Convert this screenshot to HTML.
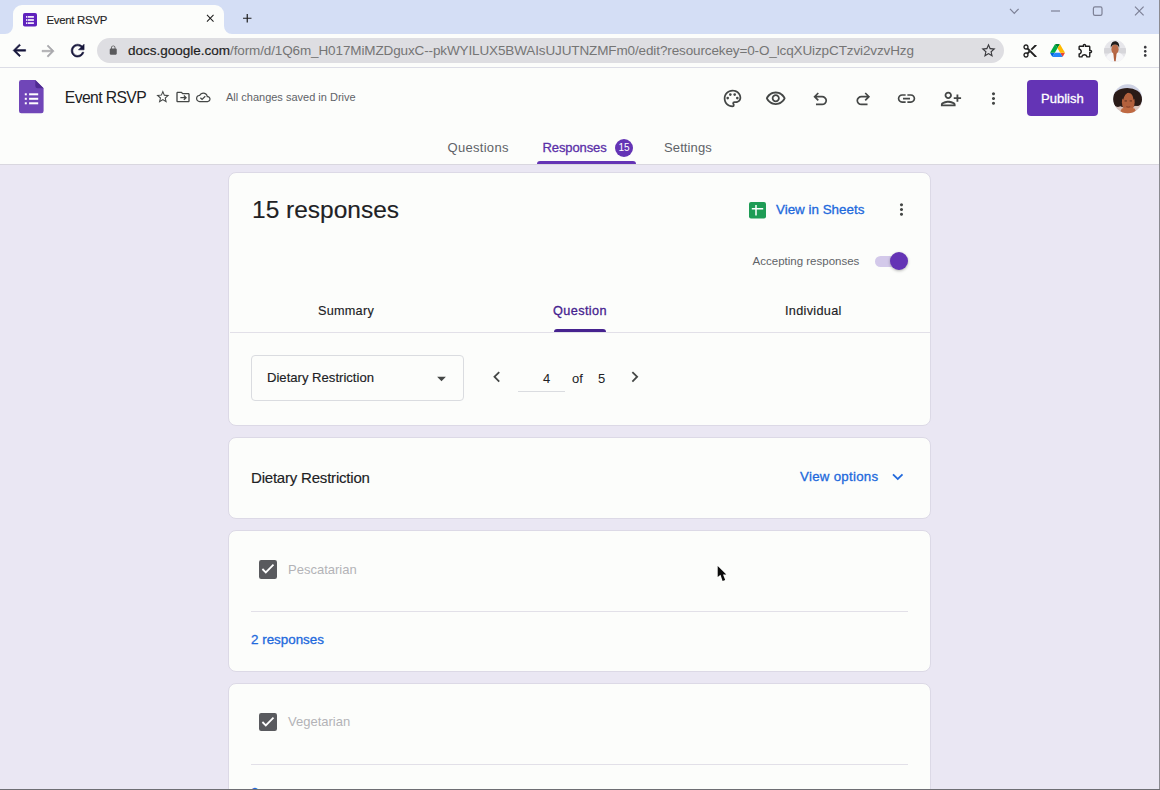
<!DOCTYPE html>
<html lang="en">
<head>
<meta charset="utf-8">
<title>Event RSVP</title>
<style>
*{box-sizing:border-box;margin:0;padding:0}
html,body{width:1160px;height:790px;overflow:hidden}
body{position:relative;background:#eae7f3;font-family:"Liberation Sans",sans-serif;color:#202124}
.abs{position:absolute}
svg{position:absolute;overflow:visible}
.t{position:absolute;white-space:nowrap;line-height:1}
.m{-webkit-text-stroke:0.3px currentColor}
.l{-webkit-text-stroke:0.15px currentColor}
/* chrome */
#tabstrip{left:0;top:0;width:1160px;height:34px;background:#d4def5}
#tab{left:13px;top:5px;width:211px;height:30px;background:#fcfdfb;border-radius:9px 9px 0 0}
#toolbar{left:0;top:34px;width:1160px;height:33px;background:#fcfdfb}
#tbline{left:0;top:67px;width:1160px;height:1px;background:#dcdde6}
#url{left:97px;top:38px;width:907px;height:25px;border-radius:13px;background:#dedee2}
/* page */
#header{left:0;top:68px;width:1160px;height:96px;background:#fcfdfb}
.card{position:absolute;left:228px;width:703px;background:#fcfdfb;border:1px solid #dcd9e6;border-radius:8px}
.hr{position:absolute;height:1px;background:#e2e0e8}
.cb{position:absolute;width:18.2px;height:18.4px;border-radius:2.2px;background:#595a5e}
</style>
</head>
<body>
<!-- browser chrome -->
<div id="tabstrip" class="abs"></div>
<div id="tab" class="abs"></div>
<div id="toolbar" class="abs"></div>
<div id="tbline" class="abs"></div>
<div id="url" class="abs"></div>
<div class="t" id="tabtitle" style="left:46.5px;top:14.9px;font-size:11.4px;letter-spacing:-0.28px;color:#1f1f1f;-webkit-text-stroke:0.15px #1f1f1f">Event RSVP</div>
<div class="t" id="urltext" style="left:128px;top:44.3px;font-size:13.5px;color:#757575"><span id="urldom" style="color:#1f1f1f;-webkit-text-stroke:0.2px #1f1f1f">docs.google.com</span><span style="letter-spacing:-0.123px">/form/d/1Q6m_H017MiMZDguxC--pkWYILUX5BWAIsUJUTNZMFm0/edit?resourcekey=0-O_lcqXUizpCTzvi2vzvHzg</span></div>

<!-- page header -->
<div id="header" class="abs"></div>
<div class="abs" style="left:0;top:164px;width:1160px;height:1px;background:#d9d7df"></div>
<div class="t" id="title" style="left:64.8px;top:89.7px;font-size:15.7px;color:#202124;letter-spacing:-0.6px">Event RSVP</div>
<div class="t" id="saved" style="left:226px;top:91.5px;font-size:11px;color:#5f6368">All changes saved in Drive</div>
<div class="abs" id="publish" style="left:1027px;top:80px;width:71px;height:36px;border-radius:4px;background:#6434b5"></div>
<div class="t m" id="publisht" style="left:1041px;top:92.0px;font-size:13px;color:#fff">Publish</div>

<div class="t" id="tq" style="left:447.5px;top:141.0px;font-size:13px;color:#5f6368;letter-spacing:0.3px">Questions</div>
<div class="t m" id="tr" style="left:542.5px;top:141.0px;font-size:13px;color:#5b2fa8;letter-spacing:-0.1px">Responses</div>
<div class="abs" id="badge" style="left:615px;top:139px;width:18px;height:18px;border-radius:9px;background:#6434b5"></div>
<div class="t" id="badget" style="left:618.4px;top:143.2px;font-size:10px;color:#fff">15</div>
<div class="t" id="ts" style="left:664px;top:141.0px;font-size:13px;color:#5f6368;letter-spacing:0.12px">Settings</div>
<div class="abs" id="tabul" style="left:537px;top:161px;width:99px;height:3px;border-radius:3px 3px 0 0;background:#6434b5"></div>

<!-- cards -->
<div class="card" style="top:172px;height:254px"></div>
<div class="t l" id="h15" style="left:252px;top:198.0px;font-size:24.5px;color:#202124">15 responses</div>
<div class="t m" id="vis" style="left:776px;top:202.7px;font-size:13.4px;color:#2169dc">View in Sheets</div>
<div class="t" id="acc" style="left:752.6px;top:255.6px;font-size:11.5px;color:#5f6368">Accepting responses</div>
<div class="abs" id="track" style="left:875px;top:256px;width:32px;height:11px;border-radius:6px;background:#d3c9ea"></div>
<div class="abs" id="thumb" style="left:890px;top:252px;width:18px;height:18px;border-radius:9px;background:#6434b5;box-shadow:0 1px 3px rgba(0,0,0,.3)"></div>

<div class="t l" id="st1" style="left:318px;top:305.4px;font-size:12.7px;color:#202124;letter-spacing:0.24px">Summary</div>
<div class="t m" id="st2" style="left:553px;top:305.4px;font-size:12.7px;color:#46238f;letter-spacing:0.4px">Question</div>
<div class="t l" id="st3" style="left:785px;top:305.4px;font-size:12.7px;color:#202124;letter-spacing:0.3px">Individual</div>
<div class="hr" style="left:230px;top:332px;width:700px"></div>
<div class="abs" id="stul" style="left:554px;top:329px;width:52px;height:3px;border-radius:3px 3px 0 0;background:#46238f"></div>

<div class="abs" id="dd" style="left:251px;top:355px;width:213px;height:46px;border:1px solid #dadce0;border-radius:4px"></div>
<div class="t l" id="ddt" style="left:267px;top:371.1px;font-size:13.1px;color:#202124">Dietary Restriction</div>
<div class="t" id="n4" style="left:543px;top:372.4px;font-size:13px;color:#202124">4</div>
<div class="t" id="nof" style="left:572px;top:372.4px;font-size:13px;color:#202124">of</div>
<div class="t" id="n5" style="left:598px;top:372.4px;font-size:13px;color:#202124">5</div>
<div class="hr" style="left:518px;top:391px;width:47px;background:#dadce0"></div>

<div class="card" style="top:437px;height:82px"></div>
<div class="t l" id="dr" style="left:251px;top:470.4px;font-size:15px;color:#202124;letter-spacing:-0.2px">Dietary Restriction</div>
<div class="t m" id="vo" style="left:800px;top:469.6px;font-size:13.3px;color:#2169dc;letter-spacing:0.275px">View options</div>

<div class="card" style="top:530px;height:142px"></div>
<div class="cb" style="left:258.6px;top:560.4px"></div>
<svg style="left:258.6px;top:560.4px" width="18" height="18" viewBox="0 0 18 18"><path d="M3.400 9l3.400 3.400 7.700-7.700" fill="none" stroke="#fff" stroke-width="1.800"/></svg>
<div class="t" id="pes" style="left:288px;top:562.7px;font-size:13px;color:#b3b3b7">Pescatarian</div>
<div class="hr" style="left:251px;top:611px;width:657px"></div>
<div class="t m" id="r1" style="left:251px;top:633.2px;font-size:13.4px;color:#2169dc">2 responses</div>

<div class="card" style="top:683px;height:142px"></div>
<div class="cb" style="left:258.6px;top:712.8px"></div>
<svg style="left:258.6px;top:712.8px" width="18" height="18" viewBox="0 0 18 18"><path d="M3.400 9l3.400 3.400 7.700-7.700" fill="none" stroke="#fff" stroke-width="1.800"/></svg>
<div class="t" id="veg" style="left:288px;top:715.2px;font-size:13px;color:#b3b3b7">Vegetarian</div>
<div class="hr" style="left:251px;top:764px;width:657px"></div>
<div class="t m" id="r2" style="left:251px;top:786px;font-size:13.4px;color:#2169dc">2 responses</div>

<!-- icons -->
<svg style="left:9.98px;top:41.23px" width="18.75" height="18.75" viewBox="0 0 24 24" fill="#15153a" stroke="#15153a" stroke-width="0.700"><path d="M20 11H7.83l5.59-5.59L12 4l-8 8 8 8 1.41-1.41L7.83 13H20v-2z"/></svg>
<svg style="left:38.90px;top:41.50px" width="18.2" height="18.2" viewBox="0 0 24 24" fill="#a9a9ad" stroke="#a9a9ad" stroke-width="0.700"><path d="M12 4l-1.41 1.41L16.17 11H4v2h12.17l-5.58 5.59L12 20l8-8z"/></svg>
<svg style="left:67.65px;top:40.75px" width="19.3" height="19.3" viewBox="0 0 24 24" fill="#15153a" stroke="#15153a" stroke-width="0.700"><path d="M17.65 6.35C16.2 4.9 14.21 4 12 4c-4.42 0-7.99 3.58-7.99 8s3.57 8 7.99 8c3.73 0 6.84-2.55 7.73-6h-2.08c-.82 2.33-3.04 4-5.650 4-3.31 0-6-2.69-6-6s2.69-6 6-6c1.66 0 3.14.69 4.22 1.780L13 11h7V4l-2.350 2.350z"/></svg>
<svg style="left:108.15px;top:45.35px" width="10.5" height="10.5" viewBox="0 0 24 24" fill="#5a5a5c"><path d="M18 8h-1V6c0-2.760-2.240-5-5-5S7 3.240 7 6v2H6c-1.100 0-2 .9-2 2v10c0 1.100.9 2 2 2h12c1.100 0 2-.9 2-2V10c0-1.100-.9-2-2-2zm-2.900 0H8.900V6c0-1.710 1.390-3.100 3.100-3.100 1.710 0 3.100 1.390 3.100 3.100v2z"/></svg>
<svg style="left:979.50px;top:42.30px" width="17" height="17" viewBox="0 0 24 24" fill="#3a3a3e"><path d="M22 9.240l-7.190-.620L12 2 9.190 8.630 2 9.240l5.460 4.730L5.820 21 12 17.270 18.180 21l-1.630-7.030L22 9.240zM12 15.400l-3.760 2.270 1-4.280-3.320-2.880 4.380-.380L12 6.100l1.710 4.040 4.380.380-3.320 2.880 1 4.280L12 15.400z"/></svg>
<svg style="left:204.25px;top:12.25px" width="12.5" height="12.5" viewBox="0 0 24 24" fill="#1f1f1f"><path d="M19 6.410L17.590 5 12 10.590 6.410 5 5 6.410 10.590 12 5 17.590 6.410 19 12 13.410 17.590 19 19 17.590 13.410 12z"/></svg>
<svg style="left:240.25px;top:10.75px" width="14.5" height="14.5" viewBox="0 0 24 24" fill="#1f1f1f"><path d="M19 13h-6v6h-2v-6H5v-2h6V5h2v6h6v2z"/></svg>
<svg style="left:1022.20px;top:42.60px" width="16" height="16" viewBox="0 0 24 24" fill="#1f1f1f"><path d="M9.640 7.640c.230-.5.360-1.050.360-1.640 0-2.210-1.790-4-4-4S2 3.790 2 6s1.790 4 4 4c.590 0 1.140-.130 1.640-.360L10 12l-2.360 2.360C7.140 14.130 6.590 14 6 14c-2.210 0-4 1.790-4 4s1.790 4 4 4 4-1.790 4-4c0-.590-.130-1.140-.360-1.640L12 14l7 7h3v-1L9.640 7.640zM6 8c-1.100 0-2-.890-2-2s.9-2 2-2 2 .890 2 2-.9 2-2 2zm0 12c-1.100 0-2-.890-2-2s.9-2 2-2 2 .890 2 2-.9 2-2 2zm6-7.500c-.280 0-.5-.220-.5-.5s.220-.5.5-.5.5.220.5.5-.220.5-.5.5zM19 3l-6 6 2 2 7-7V3z"/></svg>
<svg style="left:1076.90px;top:42.00px" width="17" height="17" viewBox="0 0 24 24" fill="#1f1f1f"><path d="M10.500 4.500c.280 0 .5.220.5.5v2h6v6h2c.280 0 .5.220.5.5s-.220.5-.5.5h-2v6h-2.120c-.680-1.750-2.390-3-4.380-3s-3.700 1.250-4.380 3H4v-2.120c1.750-.680 3-2.390 3-4.380 0-1.990-1.240-3.700-2.990-4.380L4 7h6V5c0-.280.220-.5.5-.5m0-2C9.120 2.500 8 3.620 8 5H4c-1.100 0-1.990.9-1.990 2v3.800h.290c1.490 0 2.700 1.210 2.700 2.700s-1.210 2.700-2.700 2.700H2V20c0 1.100.9 2 2 2h3.800v-.3c0-1.490 1.210-2.700 2.700-2.700s2.700 1.210 2.700 2.700v.3H17c1.100 0 2-.9 2-2v-4c1.380 0 2.500-1.120 2.500-2.500S20.380 11 19 11V7c0-1.100-.9-2-2-2h-4c0-1.380-1.120-2.500-2.500-2.500z"/></svg>
<svg style="left:1136.55px;top:42.55px" width="16.5" height="16.5" viewBox="0 0 24 24" fill="#3a3a3e"><path d="M12 8c1.100 0 2-.9 2-2s-.9-2-2-2-2 .9-2 2 .9 2 2 2zm0 2c-1.100 0-2 .9-2 2s.9 2 2 2 2-.9 2-2-.9-2-2-2zm0 6c-1.100 0-2 .9-2 2s.9 2 2 2 2-.9 2-2-.9-2-2-2z"/></svg>
<svg style="left:721.90px;top:87.90px" width="21" height="21" viewBox="0 0 24 24" fill="#444746"><path d="M12 22C6.490 22 2 17.510 2 12S6.490 2 12 2s10 4.040 10 9c0 3.310-2.690 6-6 6h-1.770c-.280 0-.5.220-.5.5 0 .120.050.230.130.330.410.470.640 1.060.640 1.670A2.500 2.500 0 0 1 12 22zm0-18c-4.410 0-8 3.590-8 8s3.590 8 8 8c.280 0 .5-.220.5-.5a.540.540 0 0 0-.140-.350c-.410-.460-.630-1.050-.630-1.650a2.500 2.500 0 0 1 2.500-2.500H16c2.210 0 4-1.790 4-4 0-3.860-3.590-7-8-7z"/></svg>
<svg style="left:765.25px;top:88.25px" width="21.5" height="21.5" viewBox="0 0 24 24" fill="#444746"><path d="M12 6c3.790 0 7.170 2.130 8.820 5.500C19.170 14.870 15.790 17 12 17s-7.170-2.130-8.820-5.500C4.830 8.130 8.210 6 12 6m0-2C7 4 2.730 7.110 1 11.500 2.730 15.890 7 19 12 19s9.270-3.110 11-7.500C21.270 7.110 17 4 12 4zm0 5c1.380 0 2.500 1.120 2.500 2.500S13.380 14 12 14s-2.500-1.120-2.500-2.500S10.620 9 12 9m0-2c-2.480 0-4.500 2.020-4.500 4.500S9.520 16 12 16s4.500-2.020 4.500-4.500S14.480 7 12 7z"/></svg>
<svg style="left:809.75px;top:88.95px" width="20.5" height="20.5" viewBox="0 0 24 24" fill="#444746"><path d="M7 19v-2h7.100q1.575 0 2.738-1T18 13.500q0-1.500-1.163-2.500T14.100 10H7.800l2.600 2.600L9 14 4 9l5-5 1.400 1.400L7.800 8h6.300q2.425 0 4.163 1.575T20 13.500q0 2.350-1.737 3.925T14.100 19z"/></svg>
<svg style="left:852.75px;top:88.95px" width="20.5" height="20.5" viewBox="0 0 24 24" fill="#444746"><path transform="translate(24 0) scale(-1 1)" d="M7 19v-2h7.100q1.575 0 2.738-1T18 13.500q0-1.500-1.163-2.500T14.100 10H7.800l2.600 2.600L9 14 4 9l5-5 1.400 1.400L7.800 8h6.300q2.425 0 4.163 1.575T20 13.500q0 2.350-1.737 3.925T14.100 19z"/></svg>
<svg style="left:896.00px;top:87.90px" width="21" height="21" viewBox="0 0 24 24" fill="#444746"><path d="M3.900 12c0-1.710 1.390-3.100 3.100-3.100h4V7H7c-2.760 0-5 2.240-5 5s2.240 5 5 5h4v-1.900H7c-1.710 0-3.100-1.390-3.100-3.100zM8 13h8v-2H8v2zm9-6h-4v1.900h4c1.710 0 3.100 1.390 3.100 3.100s-1.390 3.100-3.100 3.100h-4V17h4c2.760 0 5-2.240 5-5s-2.240-5-5-5z"/></svg>
<svg style="left:939.50px;top:87.60px" width="22" height="22" viewBox="0 0 24 24" fill="#444746"><path transform="translate(24 0) scale(-1 1)" d="M15 12c2.210 0 4-1.790 4-4s-1.790-4-4-4-4 1.790-4 4 1.790 4 4 4zm0-6c1.100 0 2 .9 2 2s-.9 2-2 2-2-.9-2-2 .9-2 2-2zm0 8c-2.670 0-8 1.340-8 4v2h16v-2c0-2.660-5.330-4-8-4zm-6 4c.220-.720 3.310-2 6-2 2.700 0 5.800 1.290 6 2H9zm-3-3v-3h3v-2H6V7H4v3H1v2h3v3z"/></svg>
<svg style="left:984.30px;top:88.80px" width="19" height="19" viewBox="0 0 24 24" fill="#444746"><path d="M12 8c1.100 0 2-.9 2-2s-.9-2-2-2-2 .9-2 2 .9 2 2 2zm0 2c-1.100 0-2 .9-2 2s.9 2 2 2 2-.9 2-2-.9-2-2-2zm0 6c-1.100 0-2 .9-2 2s.9 2 2 2 2-.9 2-2-.9-2-2-2z"/></svg>
<svg style="left:155.15px;top:88.65px" width="15.7" height="15.7" viewBox="0 0 24 24" fill="#444746"><path d="M22 9.240l-7.190-.620L12 2 9.190 8.630 2 9.240l5.460 4.730L5.820 21 12 17.270 18.180 21l-1.630-7.030L22 9.240zM12 15.400l-3.760 2.270 1-4.280-3.320-2.880 4.380-.380L12 6.100l1.710 4.040 4.380.380-3.320 2.880 1 4.280L12 15.400z"/></svg>
<svg style="left:174.80px;top:88.80px" width="16" height="16" viewBox="0 0 24 24" fill="#444746"><path d="M20 6h-8l-2-2H4c-1.100 0-2 .9-2 2v12c0 1.100.9 2 2 2h16c1.100 0 2-.9 2-2V8c0-1.100-.9-2-2-2zm0 12H4V6h5.170l2 2H20v10zM12.600 15.600L14 17l4-4-4-4-1.400 1.400 1.600 1.600H8v2h6.200z"/></svg>
<svg style="left:195.70px;top:89.70px" width="14.6" height="14.6" viewBox="0 0 24 24" fill="#444746"><path d="M19.350 10.040A7.490 7.490 0 0 0 12 4C9.110 4 6.600 5.640 5.350 8.040A5.994 5.994 0 0 0 0 14c0 3.310 2.690 6 6 6h13c2.760 0 5-2.240 5-5 0-2.640-2.050-4.780-4.650-4.960zM19 18H6c-2.210 0-4-1.790-4-4 0-2.050 1.530-3.760 3.560-3.970l1.070-.110.5-.950A5.469 5.469 0 0 1 12 6c2.620 0 4.880 1.860 5.390 4.430l.3 1.500 1.530.110A2.980 2.980 0 0 1 22 15c0 1.650-1.350 3-3 3zm-9-3.820l-2.090-2.090L6.500 13.500 10 17l6.010-6.010-1.410-1.410z"/></svg>
<svg style="left:891.50px;top:200.30px" width="19" height="19" viewBox="0 0 24 24" fill="#444746"><path d="M12 8c1.100 0 2-.9 2-2s-.9-2-2-2-2 .9-2 2 .9 2 2 2zm0 2c-1.100 0-2 .9-2 2s.9 2 2 2 2-.9 2-2-.9-2-2-2zm0 6c-1.100 0-2 .9-2 2s.9 2 2 2 2-.9 2-2-.9-2-2-2z"/></svg>
<svg style="left:486.17px;top:366.40px" width="21.6" height="21.6" viewBox="0 0 24 24" fill="#444746"><path d="M15.410 7.410L14 6l-6 6 6 6 1.410-1.410L10.830 12z"/></svg>
<svg style="left:623.83px;top:366.40px" width="21.6" height="21.6" viewBox="0 0 24 24" fill="#444746"><path d="M10 6L8.590 7.410 13.170 12l-4.580 4.590L10 18l6-6z"/></svg>
<svg style="left:430.50px;top:367.80px" width="21" height="21" viewBox="0 0 24 24" fill="#444746"><path d="M7 10l5 5 5-5z"/></svg>
<svg style="left:886.75px;top:465.85px" width="21.5" height="21.5" viewBox="0 0 24 24" fill="#2169dc"><path d="M16.590 8.590L12 13.170 7.410 8.590 6 10l6 6 6-6z"/></svg>

<!-- tab feet -->
<svg style="left:5px;top:26px" width="8" height="8" viewBox="0 0 8 8"><path d="M8 0v8H0A8 8 0 0 0 8 0z" fill="#fcfdfb"/></svg>
<svg style="left:224px;top:26px" width="8" height="8" viewBox="0 0 8 8"><path d="M0 0v8h8A8 8 0 0 1 0 0z" fill="#fcfdfb"/></svg>
<!-- favicon -->
<svg style="left:23px;top:13px" width="14" height="14" viewBox="0 0 14 14"><rect width="14" height="13.6" rx="1.8" fill="#5f22bd"/><g fill="#fff"><rect x="3" y="3.1" width="1.3" height="1.6"/><rect x="4.9" y="3.1" width="6" height="1.6"/><rect x="3" y="6.2" width="1.3" height="1.6"/><rect x="4.9" y="6.2" width="6" height="1.6"/><rect x="3" y="9.3" width="1.3" height="1.6"/><rect x="4.9" y="9.3" width="6" height="1.6"/></g></svg>
<!-- window controls -->
<svg style="left:1000px;top:0" width="160" height="34" viewBox="0 0 160 34" fill="none" stroke="#7d8196" stroke-width="1.2"><path d="M10 8.800l4.300 4.600 4.300-4.600"/><path d="M51 11h9"/><rect x="93.400" y="6.800" width="8.600" height="8.600" rx="1.600"/><path d="M135 6.700l8.600 8.600M143.600 6.700l-8.600 8.600"/></svg>
<!-- drive logo -->
<svg style="left:1050.3px;top:44px" width="15" height="13" viewBox="0 0 87.300 78"><path d="M6.600 66.850l3.850 6.650c.8 1.400 1.950 2.500 3.300 3.300L27.500 53H0c0 1.550.4 3.100 1.200 4.500z" fill="#0066da"/><path d="M43.650 25L29.900 1.200c-1.350.8-2.500 1.900-3.300 3.300L1.200 48.500C.4 49.900 0 51.450 0 53h27.500z" fill="#00ac47"/><path d="M73.550 76.800c1.350-.8 2.500-1.900 3.300-3.300l1.600-2.750L86.100 57.500c.8-1.400 1.200-2.950 1.200-4.500H59.800l5.850 11.500z" fill="#ea4335"/><path d="M43.650 25L57.400 1.200C56.050.4 54.500 0 52.900 0H34.400c-1.600 0-3.150.45-4.500 1.200z" fill="#00832d"/><path d="M59.800 53H27.500L13.750 76.800c1.350.8 2.900 1.200 4.500 1.200h50.800c1.600 0 3.150-.45 4.500-1.200z" fill="#2684fc"/><path d="M73.400 26.500L60.700 4.500c-.8-1.400-1.950-2.500-3.300-3.300L43.650 25 59.800 53h27.450c0-1.550-.4-3.100-1.200-4.500z" fill="#ffba00"/></svg>
<!-- chrome profile avatar -->
<svg style="left:1103.900px;top:39.800px" width="22" height="22" viewBox="0 0 22 22"><defs><clipPath id="ca"><circle cx="11" cy="11" r="11"/></clipPath></defs><g clip-path="url(#ca)"><rect width="22" height="22" fill="#e6e6ea"/><rect y="8" width="22" height="5.500" fill="#d6d6da"/><path d="M1 22c.3-6 3.500-8.500 6.500-9.500h7c3 1 6.200 3.500 6.500 9.500z" fill="#f6f6f8"/><ellipse cx="11" cy="9.300" rx="3.600" ry="5" fill="#b86a48"/><path d="M6.900 8C6.300 4.200 8.300 1.300 11 1.300s4.900 2.600 4.100 6.700c-.5-2.300-1.900-3.500-4.100-3.500S7.400 5.800 6.900 8z" fill="#1d1a1b"/><path d="M9.300 13.300h3.300l-.9 8h-1.500z" fill="#b05f3c"/></g></svg>
<!-- forms doc icon -->
<svg style="left:19px;top:79.700px" width="24.600" height="33.300" viewBox="0 0 24.600 33.300"><path d="M2.300 0h14l8.300 8.300v22.700a2.300 2.300 0 0 1-2.300 2.300h-20a2.300 2.300 0 0 1-2.300-2.300v-28.700a2.300 2.300 0 0 1 2.300-2.300z" fill="#7046b8"/><path d="M16.300 0l8.300 8.300h-6a2.300 2.300 0 0 1-2.300-2.300z" fill="#4f2b92"/><g fill="#fff"><rect x="5.800" y="13.300" width="2" height="2"/><rect x="10.100" y="13.300" width="9.100" height="2"/><rect x="5.800" y="17.800" width="2" height="2"/><rect x="10.100" y="17.800" width="9.100" height="2"/><rect x="5.800" y="22.300" width="2" height="2"/><rect x="10.100" y="22.300" width="9.100" height="2"/></g></svg>
<!-- account avatar -->
<svg style="left:1112.500px;top:84px" width="29.400" height="29.400" viewBox="0 0 30 30"><defs><clipPath id="cb"><circle cx="15" cy="15" r="14.800"/></clipPath></defs><g clip-path="url(#cb)"><rect width="30" height="30" fill="#cdd1e3"/><rect y="20" width="30" height="10" fill="#d9c4bc"/><ellipse cx="14.600" cy="14" rx="14.600" ry="10" fill="#2a1b17"/><ellipse cx="5" cy="17.500" rx="5" ry="6" fill="#2a1b17"/><ellipse cx="24.600" cy="16" rx="5" ry="6.500" fill="#2a1b17"/><ellipse cx="15.600" cy="18.600" rx="6.500" ry="9.600" fill="#b3613d"/><path d="M9 25c2-1 11-1 13 0l3 6H6z" fill="#c06a42"/><path d="M8.800 14c.6-4 3.600-6.300 7.200-5.600-2.600.9-4.600 3.300-5.600 7.600z" fill="#2a1b17"/><path d="M22.300 15c-.3-3-1.800-5.300-4.300-6.200 1.300 1.500 2.500 3.600 2.900 7.200z" fill="#2a1b17"/><path d="M11.800 17.300h2.400M17 17.300h2.400" stroke="#5a2d1c" stroke-width="1"/><path d="M13.600 23.200q2 .9 4 0" stroke="#7c3a26" stroke-width="0.900" fill="none"/></g></svg>
<!-- sheets icon -->
<svg style="left:749px;top:201.800px" width="17" height="16.400" viewBox="0 0 17 16.400"><rect width="17" height="16.400" rx="2" fill="#1e9c55"/><path d="M2.800 6.700h11.400M7 3v10.600" stroke="#fff" stroke-width="1.500" fill="none"/></svg>
<!-- palette dots -->
<svg style="left:721.900px;top:87.900px" width="21" height="21" viewBox="0 0 24 24" fill="#444746"><circle cx="6.500" cy="11.500" r="1.500"/><circle cx="9.500" cy="7.500" r="1.500"/><circle cx="14.500" cy="7.500" r="1.500"/><circle cx="17.500" cy="11.500" r="1.500"/></svg>
<!-- mouse cursor -->
<svg style="left:716px;top:565px" width="13" height="19" viewBox="0 0 13 19"><path d="M1.700 1V12.100L4.500 9.700 6.600 15.900 9.200 14.900 7 9.500H10.300z" fill="#0b0b0b"/></svg>
<!-- window edges -->
<div class="abs" style="left:1159px;top:0;width:1px;height:790px;background:#8b8b91"></div>
<div class="abs" style="left:0;top:789px;width:1160px;height:1px;background:#6e6e73"></div>
</body>
</html>
